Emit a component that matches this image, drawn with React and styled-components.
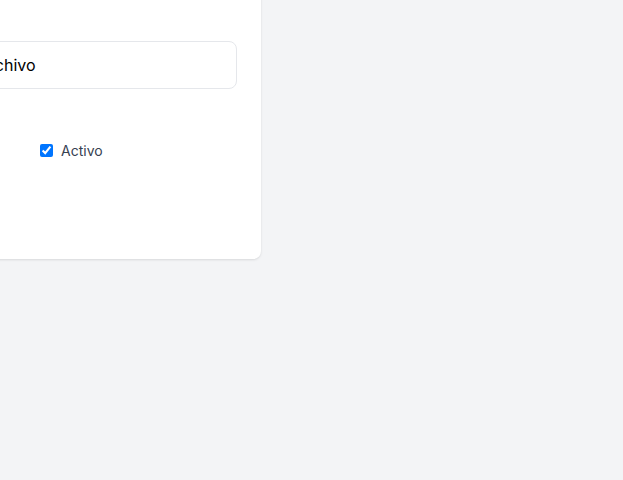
import React, { useState } from 'react';
import styled, { createGlobalStyle } from 'styled-components';

const GlobalStyle = createGlobalStyle`
  html, body {
    margin: 0;
    padding: 0;
    background: #f3f4f6;
    font-family: Inter, "Liberation Sans", sans-serif;
    overflow: hidden;
  }
`;

const Page = styled.div`
  width: 623px;
  height: 480px;
  background: #f3f4f6;
`;

const Card = styled.div`
  box-sizing: border-box;
  width: 324px;
  margin: -11px 0 0 -63px;
  padding: 52px 24px 99px 24px;
  background: #ffffff;
  border-radius: 8px;
  box-shadow: 0 1px 3px rgba(0, 0, 0, 0.08), 0 1px 2px rgba(0, 0, 0, 0.04);
`;

const Input = styled.input`
  box-sizing: border-box;
  display: block;
  height: 48px;
  width: 100%;
  padding: 12px 16px;
  border: 1px solid #e5e7eb;
  border-radius: 8px;
  font-family: Inter, "Liberation Sans", sans-serif;
  font-size: 16px;
  color: #000000;
  outline: none;
  background: #fff;
`;

const CheckRow = styled.label`
  display: flex;
  align-items: center;
  gap: 8px;
  height: 20px;
  margin: 51px 0 0 79px;
  font-size: 14px;
  color: #374151;
  cursor: pointer;
`;

const Check = styled.input`
  width: 13px;
  height: 13px;
  margin: 0;
`;

export default function App() {
  const [name, setName] = useState('Archivo');
  const [active, setActive] = useState(true);

  return (
    <Page>
      <GlobalStyle />
      <Card>
        <Input aria-label="Nombre" value={name} onChange={(e) => setName(e.target.value)} />
        <CheckRow>
          <Check type="checkbox" checked={active} onChange={(e) => setActive(e.target.checked)} />
          Activo
        </CheckRow>
      </Card>
    </Page>
  );
}
